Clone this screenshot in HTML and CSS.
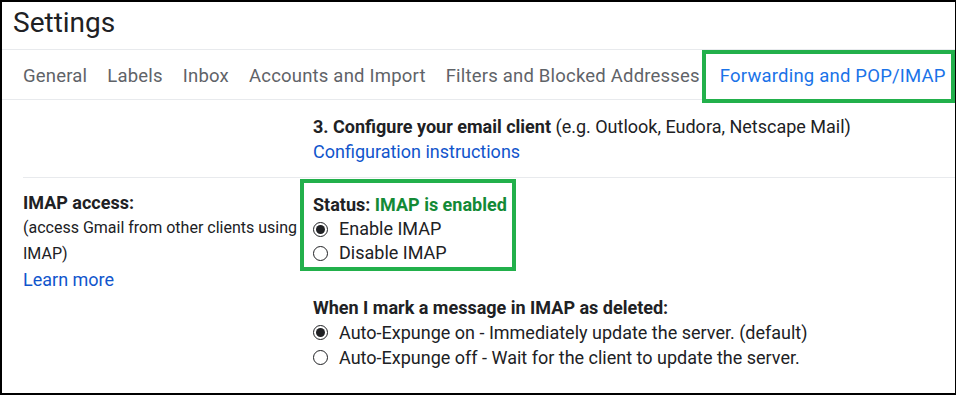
FILE: index.html
```html
<!DOCTYPE html>
<html>
<head>
<meta charset="utf-8">
<link rel="stylesheet" href="styles.css">
</head>
<body>
<div class="frame">
  <header class="title-bar"><h1 class="title">Settings</h1></header>
  <nav class="tabs">
    <span class="tab">General</span>
    <span class="tab">Labels</span>
    <span class="tab">Inbox</span>
    <span class="tab">Accounts and Import</span>
    <span class="tab">Filters and Blocked Addresses</span>
    <span class="tab tab-active">Forwarding and POP/IMAP</span>
  </nav>
  <section class="row row-config">
    <div class="row-label"></div>
    <div class="row-body">
      <div class="line"><b>3. Configure your email client</b> (e.g. Outlook, Eudora, Netscape Mail)</div>
      <div class="line"><a class="link">Configuration instructions</a></div>
    </div>
  </section>
  <section class="row row-imap">
    <div class="row-label">
      <div class="label-title">IMAP access:</div>
      <div class="label-note">(access Gmail from other clients using IMAP)</div>
      <a class="link learn">Learn more</a>
    </div>
    <div class="row-body">
      <div class="status-box">
        <div class="line"><b>Status: <span class="ok">IMAP is enabled</span></b></div>
        <label class="radio"><span class="dot on"></span>Enable IMAP</label>
        <label class="radio"><span class="dot"></span>Disable IMAP</label>
      </div>
      <div class="group">
        <div class="line"><b>When I mark a message in IMAP as deleted:</b></div>
        <label class="radio"><span class="dot on"></span>Auto-Expunge on - Immediately update the server. (default)</label>
        <label class="radio"><span class="dot"></span>Auto-Expunge off - Wait for the client to update the server.</label>
      </div>
    </div>
  </section>
</div>
</body>
</html>
```
FILE: styles.css
```css
html, body { margin: 0; padding: 0; background: #fff; }
body { font-family: Roboto, "Liberation Sans", Arial, sans-serif; color: #202124; }
.frame {
  box-sizing: border-box;
  width: 956px;
  height: 395px;
  border: 2px solid #000;
  border-right-width: 1px;
  overflow: hidden;
}
.title-bar {
  height: 48px;
  border-bottom: 1px solid #e8eaed;
  box-sizing: border-box;
  padding-left: 11px;
}
.title {
  margin: 0;
  font-weight: 400;
  font-size: 28px;
  line-height: 42px;
}
.tabs {
  display: flex;
  align-items: center;
  height: 50px;
  box-sizing: border-box;
  border-bottom: 1px solid #e8eaed;
  padding-left: 21px;
  gap: 20px;
}
.tab {
  font-size: 18.5px;
  color: #5f6368;
  line-height: 24px;
  padding-top: 2px;
  letter-spacing: 0.2px;
}
.tab-active {
  position: relative;
  color: #1a73e8;
}
.tab-active::after {
  content: "";
  position: absolute;
  left: -18px;
  right: -9px;
  top: -12px;
  bottom: -15px;
  border: 4px solid #22b04b;
}
.row {
  display: flex;
  margin-left: 21px;
}
.row-label { width: 290px; flex: none; }
.row-body { flex: 1; }
.row-config {
  padding: 14px 0 13px;
  border-bottom: 1px solid #e8eaed;
}
.line { font-size: 18px; line-height: 25px; }
.link { color: #1155cc; font-size: 18px; }
b { font-weight: 700; }
.row-imap { padding-top: 12px; }
.label-title { font-size: 18px; font-weight: 700; line-height: 25px; }
.label-note { font-size: 16px; line-height: 26px; width: 285px; }
.learn { display: block; line-height: 26px; }
.ok { color: #138a36; }
.status-box {
  width: 199px;
  margin-left: -13px;
  margin-top: -11px;
  padding: 9px 0 2px 9px;
  border: 4px solid #22b04b;
}
.radio {
  display: flex;
  align-items: center;
  font-size: 18px;
  line-height: 24px;
}
.group .radio { line-height: 25px; }
.dot {
  width: 13px;
  height: 13px;
  border: 1px solid #202124;
  border-radius: 50%;
  margin: 0 11px 0 0;
  position: relative;
  box-sizing: content-box;
  flex: none;
}
.dot.on::after {
  content: "";
  position: absolute;
  left: 2px; top: 2px;
  width: 9px; height: 9px;
  border-radius: 50%;
  background: #202124;
}
.group { margin-top: 24px; }
```
